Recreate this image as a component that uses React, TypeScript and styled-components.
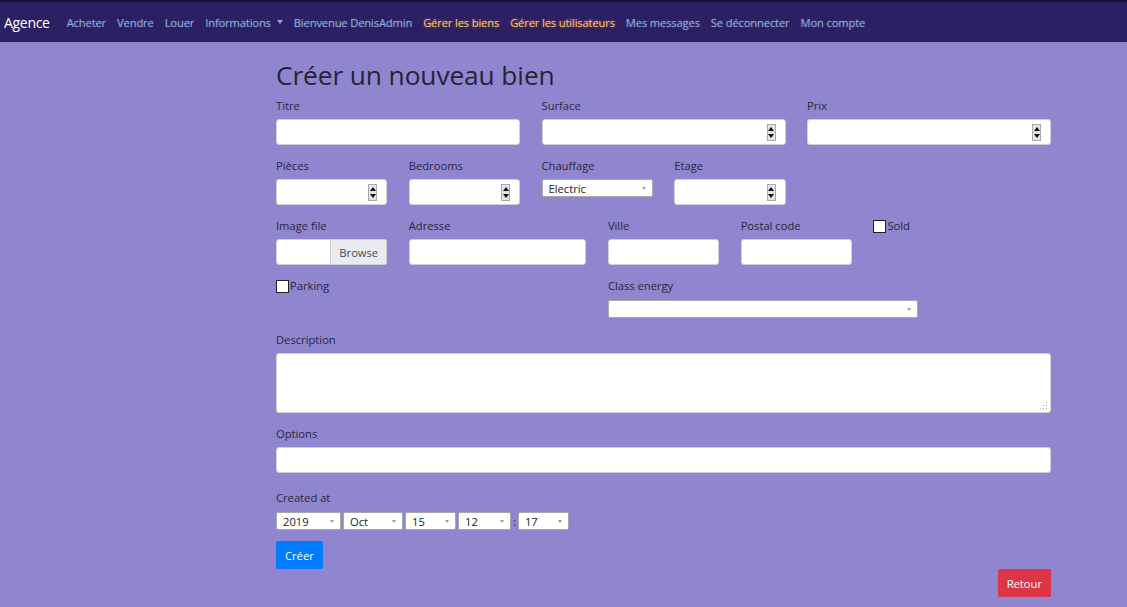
import React from "react";
import styled, { createGlobalStyle } from "styled-components";

const GlobalStyle = createGlobalStyle`
  html, body {
    margin: 0;
    padding: 0;
    background: #9086cf;
    font-family: "Open Sans", "Noto Sans", sans-serif;
  }
`;

const navLinks = [
  { label: "Acheter" },
  { label: "Vendre" },
  { label: "Louer" },
  { label: "Informations", caret: true },
  { label: "Bienvenue DenisAdmin" },
  { label: "Gérer les biens", admin: true },
  { label: "Gérer les utilisateurs", admin: true },
  { label: "Mes messages" },
  { label: "Se déconnecter" },
  { label: "Mon compte" },
];

const App = (): React.ReactElement => {
  return (
    <>
      <GlobalStyle />
      <Navbar>
        <Brand>Agence</Brand>
        <NavList>
          {navLinks.map((l) => (
            <NavLink key={l.label} admin={l.admin}>
              {l.label}
              {l.caret && <Caret />}
            </NavLink>
          ))}
        </NavList>
      </Navbar>
      <Main>
        <Title>Créer un nouveau bien</Title>
        <Grid>
          <Field span={4}>
            <Label>Titre</Label>
            <Input />
          </Field>
          <Field span={4}>
            <Label>Surface</Label>
            <NumberInput />
          </Field>
          <Field span={4}>
            <Label>Prix</Label>
            <NumberInput />
          </Field>

          <Field span={2}>
            <Label>Pièces</Label>
            <NumberInput />
          </Field>
          <Field span={2}>
            <Label>Bedrooms</Label>
            <NumberInput />
          </Field>
          <Field span={2}>
            <Label>Chauffage</Label>
            <Select value="Electric" />
          </Field>
          <Field span={2}>
            <Label>Etage</Label>
            <NumberInput />
          </Field>
          <Field span={4} />

          <Field span={2}>
            <Label>Image file</Label>
            <FileBox>
              <FileEmpty />
              <FileButton>Browse</FileButton>
            </FileBox>
          </Field>
          <Field span={3}>
            <Label>Adresse</Label>
            <Input />
          </Field>
          <Field span={2}>
            <Label>Ville</Label>
            <Input />
          </Field>
          <Field span={2}>
            <Label>Postal code</Label>
            <Input />
          </Field>
          <Field span={3}>
            <Check label="Sold" />
          </Field>

          <Field span={5}>
            <Check label="Parking" />
          </Field>
          <Field span={5} gapBelow={15}>
            <Label>Class energy</Label>
            <SelectSpacer>
              <Select value="" />
            </SelectSpacer>
          </Field>
          <Field span={2} />

          <Field span={12}>
            <Label>Description</Label>
            <TextArea>
              <Grip />
            </TextArea>
          </Field>
          <Field span={12} gapBelow={18}>
            <Label>Options</Label>
            <Input />
          </Field>
        </Grid>

        <DateLabel>Created at</DateLabel>
        <DateRow>
          <Select value="2019" width={65} />
          <Select value="Oct" width={60} />
          <Select value="15" width={51} />
          <Select value="12" width={53} />
          <Colon>:</Colon>
          <Select value="17" width={51} />
        </DateRow>
        <Button variant="primary">Créer</Button>
        <Footer>
          <Button variant="danger">Retour</Button>
        </Footer>
      </Main>
    </>
  );
};

export default App;

const NumberInput = () => (
  <InputWrap>
    <Input />
    <Spinner>
      <Arrow up />
      <Arrow />
    </Spinner>
  </InputWrap>
);

const Select = ({ value, width }: { value: string; width?: number }) => (
  <SelectBox style={width ? { width } : undefined}>
    <span>{value}</span>
    <SelectArrow />
  </SelectBox>
);

const Check = ({ label }: { label: string }) => (
  <CheckLabel>
    <CheckBox />
    {label}
  </CheckLabel>
);

const Navbar = styled.nav`
  height: 40px;
  border-top: 2px solid #15102e;
  background: #2c1f63;
  display: flex;
  align-items: center;
  padding: 0 0 0 4px;
`;
const Brand = styled.div`
  color: #ffffff;
  font-size: 14px;
  margin-right: 17px;
  letter-spacing: -0.3px;
`;
const NavList = styled.div`
  display: flex;
  gap: 11px;
`;
const NavLink = styled.span<{ admin?: boolean }>`
  font-size: 11.2px;
  letter-spacing: -0.15px;
  color: ${(p) => (p.admin ? "#f2c77a" : "#8eaed3")};
  text-shadow: ${(p) =>
    p.admin ? "0 0 3px rgba(190, 110, 40, 0.9)" : "0 0 2px rgba(110, 150, 220, 0.5)"};
  display: flex;
  align-items: center;
`;
const Caret = styled.span`
  margin-left: 6px;
  border-top: 4px solid #8eaed3;
  border-left: 3.5px solid transparent;
  border-right: 3.5px solid transparent;
`;
const Main = styled.main`
  width: 775px;
  margin-left: 276px;
  padding-top: 15px;
`;
const Title = styled.h1`
  margin: 0 0 6px;
  font-size: 26.3px;
  font-weight: 400;
  line-height: 36px;
  color: #272336;
  letter-spacing: -0.1px;
`;
const Grid = styled.div`
  display: grid;
  grid-template-columns: repeat(12, 1fr);
  column-gap: 21.5px;
`;
const Field = styled.div<{ span: number; gapBelow?: number }>`
  grid-column: span ${(p) => p.span};
  margin-bottom: ${(p) => p.gapBelow ?? 14}px;
`;
const Label = styled.div`
  font-size: 11.2px;
  line-height: 14px;
  color: #2a2640;
  margin-bottom: 6px;
`;
const Input = styled.div`
  height: 26px;
  box-sizing: border-box;
  background: #ffffff;
  border: 1px solid #cfd2d8;
  border-radius: 3px;
`;
const InputWrap = styled.div`
  position: relative;
`;
const Spinner = styled.div`
  position: absolute;
  right: 10px;
  top: 5px;
  width: 9px;
  height: 17px;
  background: #e4e4e4;
  border: 1px solid #a9a9a9;
  box-sizing: border-box;
  display: flex;
  flex-direction: column;
  align-items: center;
  justify-content: space-around;
`;
const Arrow = styled.span<{ up?: boolean }>`
  border-left: 3px solid transparent;
  border-right: 3px solid transparent;
  ${(p) => (p.up ? "border-bottom: 4px solid #111;" : "border-top: 4px solid #111;")}
`;
const SelectSpacer = styled.div`
  padding-top: 1px;
`;
const SelectBox = styled.div`
  height: 18px;
  box-sizing: border-box;
  background: #ffffff;
  border: 1px solid #a8a8a8;
  border-radius: 2px;
  display: flex;
  align-items: center;
  justify-content: space-between;
  padding: 0 6px;
  font-size: 11.2px;
  color: #222;
`;
const SelectArrow = styled.span`
  border-top: 3px solid #9a9a9a;
  border-left: 2.5px solid transparent;
  border-right: 2.5px solid transparent;
`;
const FileBox = styled.div`
  display: flex;
  height: 26px;
  box-sizing: border-box;
  border: 1px solid #cfd2d8;
  border-radius: 3px;
  overflow: hidden;
  background: #fff;
`;
const FileEmpty = styled.div`
  flex: 1;
`;
const FileButton = styled.div`
  width: 55px;
  background: #e9ecef;
  border-left: 1px solid #cfd2d8;
  font-size: 11.2px;
  color: #454a52;
  display: flex;
  align-items: center;
  justify-content: center;
`;
const CheckLabel = styled.label`
  display: flex;
  align-items: center;
  font-size: 11.2px;
  line-height: 14px;
  color: #2a2640;
`;
const CheckBox = styled.span`
  width: 13px;
  height: 13px;
  box-sizing: border-box;
  background: #fff;
  border: 1px solid #222;
  margin-right: 1px;
`;
const TextArea = styled.div`
  position: relative;
  height: 60px;
  box-sizing: border-box;
  background: #ffffff;
  border: 1px solid #cfd2d8;
  border-radius: 3px;
`;
const Grip = styled.span`
  position: absolute;
  right: 3px;
  bottom: 3px;
  width: 8px;
  height: 8px;
  background: radial-gradient(circle, #aaa 0.8px, transparent 1px) 0 0 / 3px 3px;
  clip-path: polygon(100% 0, 100% 100%, 0 100%);
`;
const DateLabel = styled(Label)`
  margin-bottom: 7px;
`;
const DateRow = styled.div`
  display: flex;
  align-items: center;
  gap: 2px;
  margin-bottom: 11px;
`;
const Colon = styled.span`
  font-size: 11px;
  color: #222;
`;
const Button = styled.button<{ variant: "primary" | "danger" }>`
  height: 28px;
  padding: 0 9px;
  border: none;
  border-radius: 2px;
  font-family: inherit;
  font-size: 11.2px;
  color: #fff;
  background: ${(p) => (p.variant === "primary" ? "#007bff" : "#dc3545")};
`;
const Footer = styled.div`
  display: flex;
  justify-content: flex-end;
`;
